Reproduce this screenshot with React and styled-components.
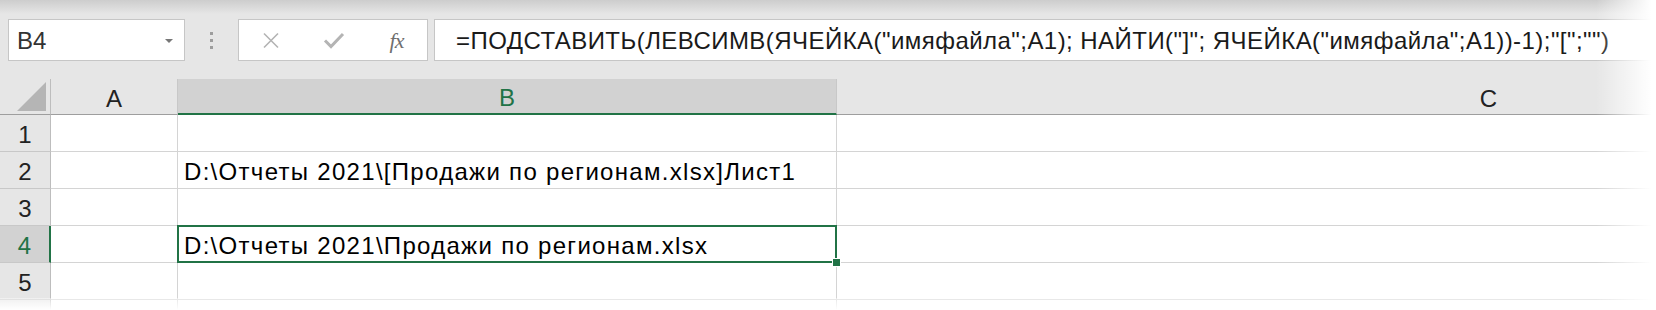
import styled, { createGlobalStyle } from "styled-components";

const GlobalStyle = createGlobalStyle`
    html, body {
        margin: 0;
        padding: 0;
        background: #ffffff;
        overflow: hidden;
    }
`;

const GREEN = "#217346";
const FONT = `"Liberation Sans", Arial, sans-serif`;

const Page = styled.div`
    position: relative;
    width: 1656px;
    height: 310px;
    overflow: hidden;
    background: #ffffff;
    font-family: ${FONT};
`;

const Toolbar = styled.div`
    display: flex;
    align-items: flex-start;
    box-sizing: border-box;
    height: 79px;
    padding: 19px 0 0 8px;
    background: linear-gradient(#cdcdcd 0, #e6e6e6 14px);
`;

const Box = styled.div`
    box-sizing: border-box;
    height: 42px;
    border: 1px solid #c6c6c6;
    background: #ffffff;
`;

const NameBox = styled(Box)`
    display: flex;
    align-items: center;
    justify-content: space-between;
    width: 177px;
    padding: 1px 11px 0 8px;
    font-size: 24px;
    color: #333333;
`;

const DropArrow = styled.span`
    width: 0;
    height: 0;
    border-left: 4px solid transparent;
    border-right: 4px solid transparent;
    border-top: 4px solid #777777;
`;

const Grip = styled.div`
    display: flex;
    flex-direction: column;
    align-items: center;
    justify-content: center;
    gap: 4px;
    width: 53px;
    height: 42px;
`;

const Dot = styled.span`
    width: 3px;
    height: 3px;
    background: #9d9d9d;
`;

const ButtonsBox = styled(Box)`
    display: grid;
    grid-template-columns: repeat(3, 63px);
    align-items: center;
    justify-items: center;
    width: 190px;
`;

const Fx = styled.span`
    font-family: "Liberation Serif", "Times New Roman", serif;
    font-style: italic;
    font-size: 22px;
    color: #6f6f6f;
    letter-spacing: -1px;
    padding-top: 2px;
`;

const FormulaBox = styled(Box)`
    flex: 1;
    display: flex;
    align-items: center;
    margin-left: 6px;
    padding: 1px 0 0 21px;
    border-right: none;
    font-size: 24px;
    letter-spacing: 0.45px;
    color: #1a1a1a;
    white-space: nowrap;
    overflow: hidden;
`;

const Sheet = styled.div`
    display: grid;
    grid-template-columns: 51px 127px 659px 1304px;
    grid-template-rows: 36px;
    grid-auto-rows: 37px;
    font-size: 24px;
`;

const ColHead = styled.div`
    display: flex;
    align-items: center;
    justify-content: center;
    box-sizing: border-box;
    padding-top: 4px;
    background: ${p => (p.$active ? "#d2d2d2" : "#e6e6e6")};
    border-right: 1px solid #c8c8c8;
    border-bottom: ${p => (p.$active ? `2px solid ${GREEN}` : "1px solid #9e9e9e")};
    color: ${p => (p.$active ? GREEN : "#222222")};
`;

const Corner = styled(ColHead)`
    justify-content: flex-end;
    align-items: flex-end;
    padding: 0 3px 2px 0;
    border-right: 1px solid #bdbdbd;
`;

const RowHead = styled.div`
    display: flex;
    align-items: center;
    justify-content: center;
    box-sizing: border-box;
    padding-top: 3px;
    background: ${p => (p.$active ? "#d2d2d2" : "#e6e6e6")};
    border-right: ${p => (p.$active ? `2px solid ${GREEN}` : "1px solid #bdbdbd")};
    border-bottom: 1px solid #c8c8c8;
    color: ${p => (p.$active ? GREEN : "#222222")};
`;

const Cell = styled.div`
    position: relative;
    display: flex;
    align-items: center;
    box-sizing: border-box;
    padding: 3px 0 0 6px;
    border-right: 1px solid #d4d4d4;
    border-bottom: 1px solid #d4d4d4;
    color: #000000;
    letter-spacing: 1.3px;
    white-space: nowrap;
    z-index: ${p => (p.$selected ? 1 : 0)};

    ${p => p.$selected && `
        &::after {
            content: "";
            position: absolute;
            top: -1px;
            left: -1px;
            right: -1px;
            bottom: -1px;
            border: 2px solid ${GREEN};
        }
        &::before {
            content: "";
            position: absolute;
            right: -5px;
            bottom: -5px;
            width: 7px;
            height: 7px;
            background: ${GREEN};
            border: 1px solid #ffffff;
            z-index: 2;
        }
    `}
`;

const FadeRight = styled.div`
    position: absolute;
    top: 0;
    right: 0;
    width: 60px;
    height: 100%;
    background: linear-gradient(to right, rgba(255, 255, 255, 0), #ffffff 92%);
    pointer-events: none;
    z-index: 5;
`;

const FadeBottom = styled.div`
    position: absolute;
    left: 0;
    bottom: 0;
    width: 100%;
    height: 12px;
    background: linear-gradient(rgba(255, 255, 255, 0.4), #ffffff);
    pointer-events: none;
    z-index: 5;
`;

const CancelIcon = () => (
    <svg width="18" height="17" viewBox="0 0 18 17">
        <path d="M2 1.5 L16 15.5 M16 1.5 L2 15.5" stroke="#b4b4b4" strokeWidth="1.6" fill="none" />
    </svg>
);

const EnterIcon = () => (
    <svg width="22" height="17" viewBox="0 0 22 17">
        <path d="M2 8.5 L8 14.5 L20 2" stroke="#b4b4b4" strokeWidth="3" fill="none" />
    </svg>
);

const SelectAll = () => (
    <svg width="30" height="30" viewBox="0 0 30 30">
        <polygon points="29,0 29,29 0,29" fill="#b5b5b5" />
    </svg>
);

// row 6 is only a sliver at the bottom edge, so it gets no label
const rows = [
    { n: 1, b: "" },
    { n: 2, b: "D:\\Отчеты 2021\\[Продажи по регионам.xlsx]Лист1" },
    { n: 3, b: "" },
    { n: 4, b: "D:\\Отчеты 2021\\Продажи по регионам.xlsx", active: true },
    { n: 5, b: "" },
    { n: 6, b: "", hideLabel: true },
];

const formula = `=ПОДСТАВИТЬ(ЛЕВСИМВ(ЯЧЕЙКА("имяфайла";A1); НАЙТИ("]"; ЯЧЕЙКА("имяфайла";A1))-1);"[";"")`;

const Row = ({ row }) => (
    <>
        <RowHead $active={row.active}>{row.hideLabel ? "" : row.n}</RowHead>
        <Cell />
        <Cell $selected={row.active}>{row.b}</Cell>
        <Cell />
    </>
);

const App = () => {
    return (
        <Page>
            <GlobalStyle />
            <Toolbar>
                <NameBox>
                    <span>B4</span>
                    <DropArrow />
                </NameBox>
                <Grip>
                    <Dot />
                    <Dot />
                    <Dot />
                </Grip>
                <ButtonsBox>
                    <CancelIcon />
                    <EnterIcon />
                    <Fx>fx</Fx>
                </ButtonsBox>
                <FormulaBox>{formula}</FormulaBox>
            </Toolbar>

            <Sheet>
                <Corner><SelectAll /></Corner>
                <ColHead>A</ColHead>
                <ColHead $active>B</ColHead>
                <ColHead>C</ColHead>

                {rows.map(row => (
                    <Row key={row.n} row={row} />
                ))}
            </Sheet>

            <FadeRight />
            <FadeBottom />
        </Page>
    );
};

export default App;
